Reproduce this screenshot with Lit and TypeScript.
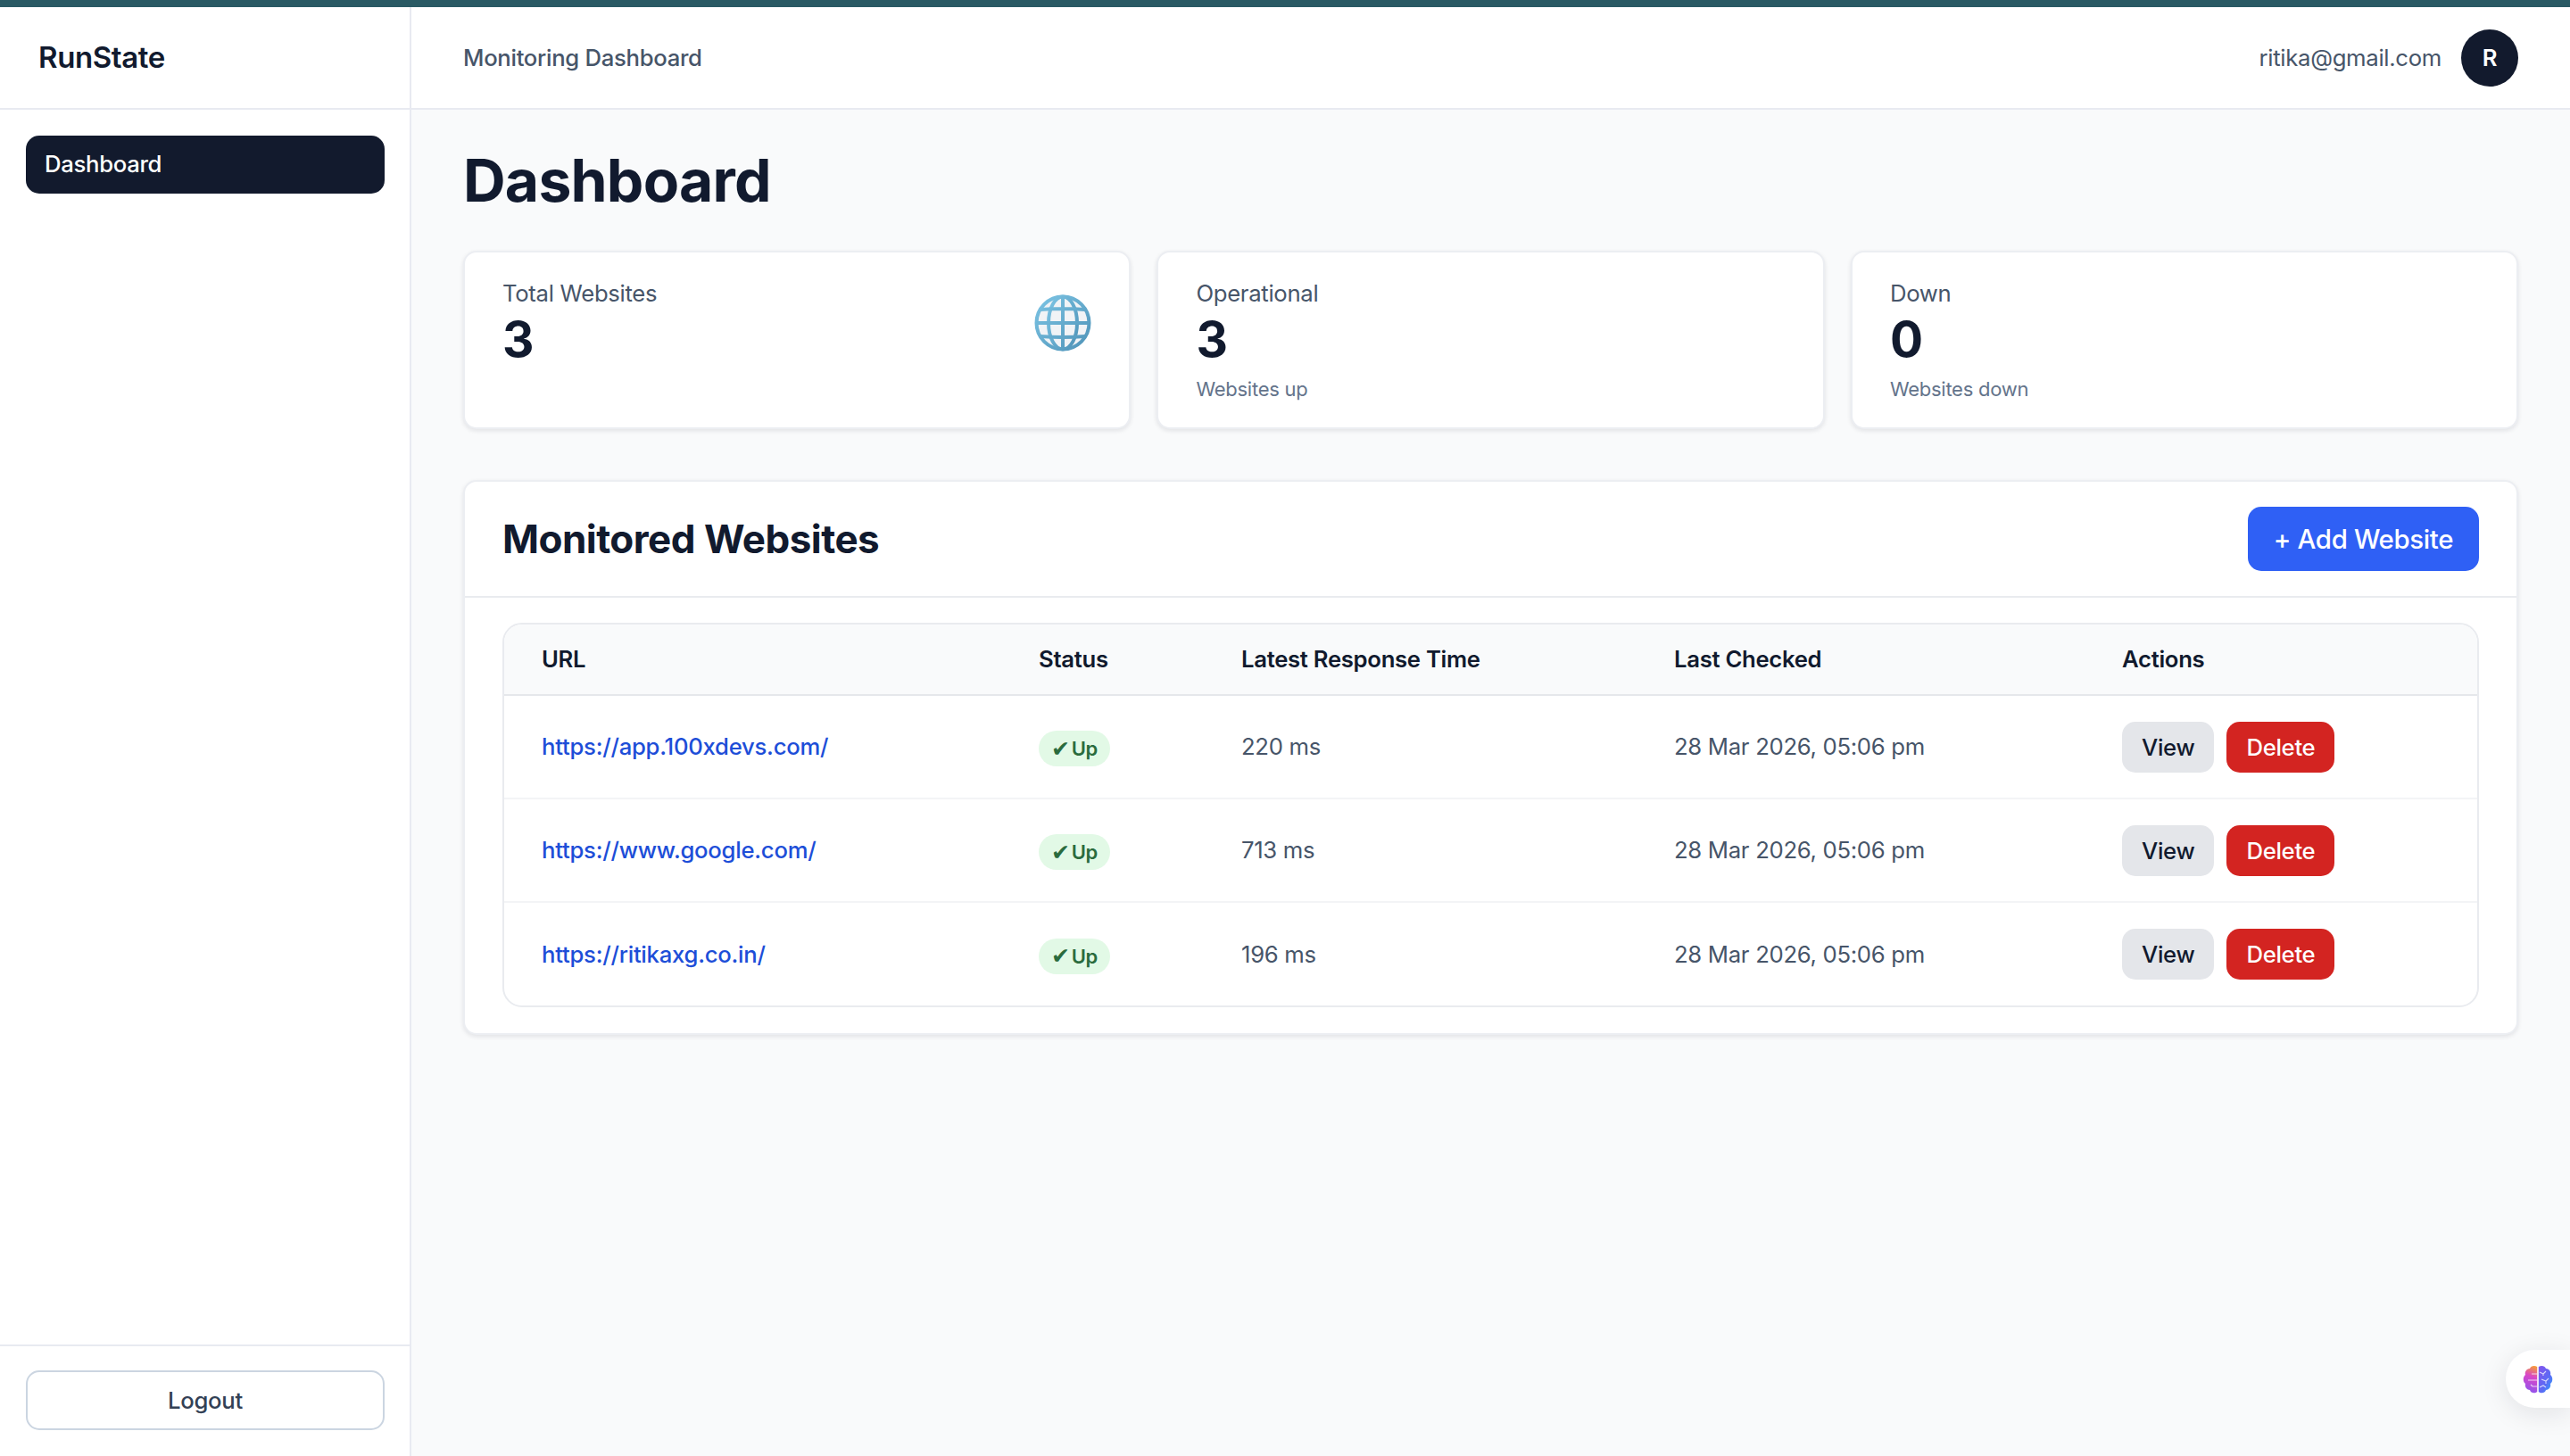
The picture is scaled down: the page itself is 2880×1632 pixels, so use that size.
import { css, html, LitElement } from "lit";
import { customElement } from "lit/decorators.js";

const sites = [
    { url: "https://app.100xdevs.com/", ms: 220 },
    { url: "https://www.google.com/", ms: 713 },
    { url: "https://ritikaxg.co.in/", ms: 196 },
];

const globe = html`
    <svg class="globe" viewBox="0 0 64 64" fill="none">
        <defs>
            <linearGradient id="gl" x1="0" y1="0" x2="1" y2="1">
                <stop offset="0" stop-color="#7cc4e4"></stop>
                <stop offset="1" stop-color="#4f93b8"></stop>
            </linearGradient>
        </defs>
        <circle cx="32" cy="32" r="30" fill="#f1f3f6"></circle>
        <g stroke="url(#gl)" stroke-width="4">
            <circle cx="32" cy="32" r="29.5"></circle>
            <ellipse cx="32" cy="32" rx="16" ry="29.5"></ellipse>
            <path d="M32 2v60M2 32h60M7 17Q32 15 57 17M7 47Q32 49 57 47"></path>
        </g>
    </svg>
`;

const brain = html`
    <svg class="brain" viewBox="0 0 34 32" fill="none">
        <defs>
            <linearGradient id="bl" x1="0.7" y1="0" x2="0.5" y2="1">
                <stop offset="0" stop-color="#f59a3c"></stop>
                <stop offset="0.4" stop-color="#d946c8"></stop>
                <stop offset="1" stop-color="#8f55ee"></stop>
            </linearGradient>
            <linearGradient id="br" x1="0" y1="0" x2="1" y2="1">
                <stop offset="0" stop-color="#8453ec"></stop>
                <stop offset="0.6" stop-color="#5a6cf5"></stop>
                <stop offset="1" stop-color="#2fa8fb"></stop>
            </linearGradient>
        </defs>
        <path d="M16.2 2C13 0 9 1 8 4C4 4 2 8 3 11C0 13 0 19 3 21C2 25 5 28 8 28C9 32 14 32 16.2 30Z" fill="url(#bl)"></path>
        <path d="M17.8 2C21 0 25 1 26 4C30 4 32 8 31 11C34 13 34 19 31 21C32 25 29 28 26 28C25 32 20 32 17.8 30Z" fill="url(#br)"></path>
        <g stroke="#fff" stroke-width="1.1" opacity="0.75">
            <path d="M16 10H10M16 17H6M16 24H11L9 22"></path>
            <path d="M19 8L23 10L26 7M23 10V12M21 16L26 18L29 15M26 18V21M19 25L23 23L26 25"></path>
        </g>
    </svg>
`;

@customElement("app-root")
export class AppRoot extends LitElement {
    protected override render() {
        return html`
            <div class="topline"></div>
            <div class="shell">
                <aside class="sidebar">
                    <div class="brand">RunState</div>
                    <nav class="nav"><a class="nav-item">Dashboard</a></nav>
                    <div class="side-foot"><button class="logout">Logout</button></div>
                </aside>
                <div class="main">
                    <header class="header">
                        <span class="crumb">Monitoring Dashboard</span>
                        <div class="user">
                            <span class="email">ritika@gmail.com</span>
                            <span class="avatar">R</span>
                        </div>
                    </header>
                    <main class="content">
                        <h1>Dashboard</h1>
                        <section class="stats">
                            <div class="card stat">
                                <div>
                                    <div class="label">Total Websites</div>
                                    <div class="value">3</div>
                                </div>
                                ${globe}
                            </div>
                            <div class="card stat">
                                <div>
                                    <div class="label">Operational</div>
                                    <div class="value">3</div>
                                    <div class="hint">Websites up</div>
                                </div>
                            </div>
                            <div class="card stat">
                                <div>
                                    <div class="label">Down</div>
                                    <div class="value">0</div>
                                    <div class="hint">Websites down</div>
                                </div>
                            </div>
                        </section>
                        <section class="card monitored">
                            <div class="mon-head">
                                <h2>Monitored Websites</h2>
                                <button class="add">+ Add Website</button>
                            </div>
                            <div class="mon-body">
                                <div class="table-wrap">
                                    <table>
                                        <thead>
                                            <tr>
                                                <th>URL</th>
                                                <th>Status</th>
                                                <th>Latest Response Time</th>
                                                <th>Last Checked</th>
                                                <th>Actions</th>
                                            </tr>
                                        </thead>
                                        <tbody>
                                            ${sites.map(
                                                (s) => html`
                                                    <tr>
                                                        <td><a class="link">${s.url}</a></td>
                                                        <td><span class="badge"><span class="tick">✔</span>Up</span></td>
                                                        <td>${s.ms} ms</td>
                                                        <td>28 Mar 2026, 05:06 pm</td>
                                                        <td>
                                                            <div class="actions">
                                                                <button class="btn view">View</button>
                                                                <button class="btn del">Delete</button>
                                                            </div>
                                                        </td>
                                                    </tr>
                                                `
                                            )}
                                        </tbody>
                                    </table>
                                </div>
                            </div>
                        </section>
                    </main>
                </div>
            </div>
            <div class="float">${brain}</div>
        `;
    }

    static styles = css`
        :host {
            display: block;
            position: relative;
            height: 1632px;
            overflow: hidden;
            background: #f9fafb;
            font-family: Inter, "Liberation Sans", sans-serif;
            color: #111a2e;
        }

        .shell, .shell * {
            letter-spacing: -0.012em;
        }

        .topline {
            height: 8px;
            background: #2a5a64;
        }

        .shell {
            display: flex;
            height: 1624px;
        }

        /* sidebar */
        .sidebar {
            width: 461px;
            flex: none;
            box-sizing: border-box;
            display: flex;
            flex-direction: column;
            background: #fff;
            border-right: 2px solid #e8eaf1;
        }

        .brand {
            height: 115px;
            flex: none;
            box-sizing: border-box;
            display: flex;
            align-items: center;
            padding: 0 0 2px 43px;
            font-size: 33px;
            font-weight: 600;
            border-bottom: 2px solid #e8eaf1;
        }

        .nav {
            flex: 1;
            padding: 29px 28px 0 29px;
        }

        .nav-item {
            display: flex;
            align-items: center;
            height: 65px;
            box-sizing: border-box;
            padding: 0 0 2px 21px;
            border-radius: 15px;
            background: #121a2d;
            color: #fff;
            font-size: 25.7px;
            font-weight: 500;
        }

        .side-foot {
            padding: 27px 28px 29px 29px;
            border-top: 2px solid #e8eaf1;
        }

        .logout {
            display: block;
            width: 100%;
            height: 67px;
            border: 2px solid #cbd5e1;
            border-radius: 15px;
            background: #fff;
            color: #334155;
            font: 500 25.7px Inter, sans-serif;
        }

        /* main column */
        .main {
            flex: 1;
            min-width: 0;
        }

        .header {
            height: 115px;
            box-sizing: border-box;
            display: flex;
            align-items: center;
            justify-content: space-between;
            padding: 0 58px;
            background: #fff;
            border-bottom: 2px solid #e8eaf1;
        }

        .crumb {
            font-size: 25.7px;
            font-weight: 500;
            color: #475569;
        }

        .user {
            display: flex;
            align-items: center;
            gap: 22px;
        }

        .email {
            font-size: 25.7px;
            color: #475569;
        }

        .avatar {
            width: 64px;
            height: 64px;
            border-radius: 50%;
            display: flex;
            align-items: center;
            justify-content: center;
            background: #121a2d;
            color: #fff;
            font-size: 25.7px;
            font-weight: 600;
        }

        .content {
            padding: 0 58px;
        }

        h1 {
            margin: 0;
            height: 158px;
            display: flex;
            align-items: center;
            font-size: 66px;
            font-weight: 700;
            line-height: 1;
        }

        .stats {
            display: grid;
            grid-template-columns: repeat(3, 1fr);
            gap: 29.4px;
            margin-bottom: 57px;
        }

        .card {
            background: #fff;
            border: 2px solid #eceef2;
            border-radius: 15px;
            box-shadow: 0 2px 5px rgba(17, 24, 39, 0.1);
            box-sizing: border-box;
        }

        .stat {
            height: 200px;
            display: flex;
            justify-content: space-between;
            padding: 28px 42px;
        }

        .label {
            font-size: 25.7px;
            line-height: 36px;
            color: #475569;
        }

        .value {
            font-size: 55px;
            font-weight: 700;
            line-height: 66px;
        }

        .hint {
            margin-top: 8px;
            font-size: 22px;
            line-height: 30px;
            color: #64748b;
        }

        .globe {
            width: 64px;
            height: 64px;
            margin-top: 19px;
        }

        /* monitored websites */
        .monitored {
            height: 622px;
        }

        .mon-head {
            height: 130px;
            box-sizing: border-box;
            display: flex;
            align-items: center;
            justify-content: space-between;
            padding: 0 42px;
            border-bottom: 2px solid #e9ebef;
        }

        h2 {
            margin: 0;
            font-size: 44px;
            font-weight: 700;
        }

        .add {
            width: 259px;
            height: 72px;
            border: none;
            border-radius: 15px;
            background: #2f60f5;
            color: #fff;
            font: 500 29.4px Inter, sans-serif;
        }

        .mon-body {
            padding: 28px 42px 0;
        }

        .table-wrap {
            border: 2px solid #e9ebef;
            border-radius: 22px;
            overflow: hidden;
        }

        table {
            width: 100%;
            table-layout: fixed;
            border-collapse: collapse;
        }

        th, td {
            box-sizing: border-box;
            padding: 0 0 0 42px;
            text-align: left;
        }

        th {
            height: 79px;
            padding-bottom: 2px;
            background: #f9fafb;
            font-size: 25.7px;
            font-weight: 600;
            color: #111a2e;
            border-bottom: 2px solid #e5e7eb;
        }

        th:nth-child(1) { width: 557px; }
        th:nth-child(2) { width: 227px; }
        th:nth-child(3) { width: 485px; }
        th:nth-child(4) { width: 502px; }

        td {
            height: 116px;
            padding-bottom: 1px;
            font-size: 25.7px;
            color: #475569;
            border-bottom: 2px solid #f3f4f6;
        }

        tr:last-child td {
            border-bottom: none;
        }

        .link {
            color: #1d4ed8;
            font-weight: 500;
            letter-spacing: -0.01em;
        }

        .badge {
            display: inline-flex;
            align-items: center;
            justify-content: center;
            width: 80px;
            height: 40px;
            margin-top: 5px;
            border-radius: 20px;
            background: #e2f9e6;
            color: #2a6b3d;
            font-size: 22px;
            font-weight: 600;
        }

        .tick {
            font-family: "DejaVu Sans", sans-serif;
            font-size: 25px;
            margin-right: 2px;
        }

        .actions {
            display: flex;
            gap: 14px;
            margin-top: 1px;
        }

        .btn {
            height: 57px;
            padding: 0 22px;
            border: none;
            border-radius: 15px;
            font: 500 25.7px Inter, sans-serif;
        }

        .view {
            background: #e4e6ea;
            color: #111a2e;
        }

        .del {
            background: #d32421;
            color: #fff;
        }

        /* floating assistant pill */
        .float {
            position: absolute;
            right: 0;
            top: 1513px;
            width: 72px;
            height: 65px;
            display: flex;
            align-items: center;
            padding-left: 19px;
            box-sizing: border-box;
            border-radius: 33px 0 0 33px;
            background: #fff;
            box-shadow: 0 6px 30px rgba(17, 24, 39, 0.1);
        }

        .brain {
            width: 34px;
            height: 32px;
        }
    `;
}
